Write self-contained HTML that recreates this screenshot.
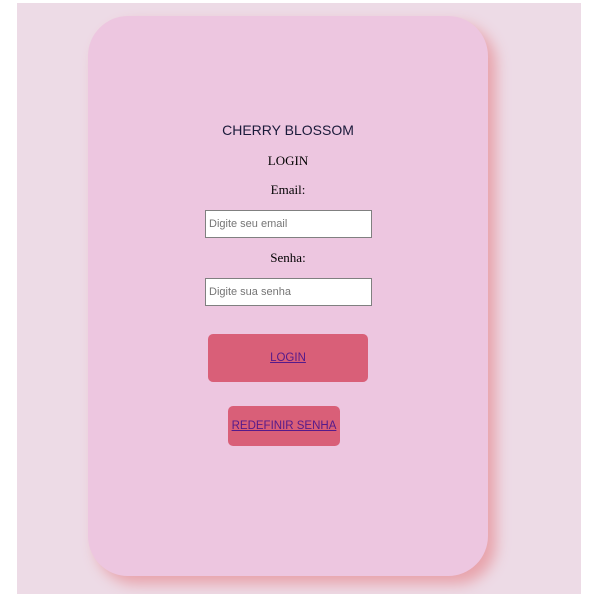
<!DOCTYPE html>
<html><head><style>
html,body{margin:0;padding:0;background:#fff;width:598px;height:606px;overflow:hidden}
.bg{position:absolute;left:17px;top:3px;width:564px;height:591px;background:#eddbe6;overflow:hidden}
.card{position:absolute;left:71px;top:13px;width:400px;height:560px;background:#edc6e0;border-radius:40px;box-shadow:8px 8px 14px #e8a3ab}
.t{position:absolute;left:0;width:400px;text-align:center;color:#000}
.h1{top:106px;font:14px "Liberation Sans",sans-serif;color:#1a1a3a}
.h2{top:137px;font:13px "Liberation Serif",serif}
.l{font:13px "Liberation Serif",serif}
.in{position:absolute;left:117px;width:162px;height:26px;border:1px solid #808080;background:#fff;font:11px "Liberation Sans",sans-serif;color:#757575;line-height:26px;padding-left:3px;box-sizing:content-box}
.btn{position:absolute;background:#d95f78;border-radius:5px;text-align:center;font:11.5px "Liberation Sans",sans-serif;color:#551a8b;text-decoration:underline}
</style></head><body>
<div class="bg"><div class="card">
<div class="t h1">CHERRY BLOSSOM</div>
<div class="t h2">LOGIN</div>
<div class="t l" style="top:166px">Email:</div>
<div class="in" style="top:194px">Digite seu email</div>
<div class="t l" style="top:234px">Senha:</div>
<div class="in" style="top:262px">Digite sua senha</div>
<div class="btn" style="left:120px;top:318px;width:160px;height:48px;line-height:48px">LOGIN</div>
<div class="btn" style="left:140px;top:390px;width:112px;height:40px;line-height:40px">REDEFINIR SENHA</div>
</div></div>
</body></html>
